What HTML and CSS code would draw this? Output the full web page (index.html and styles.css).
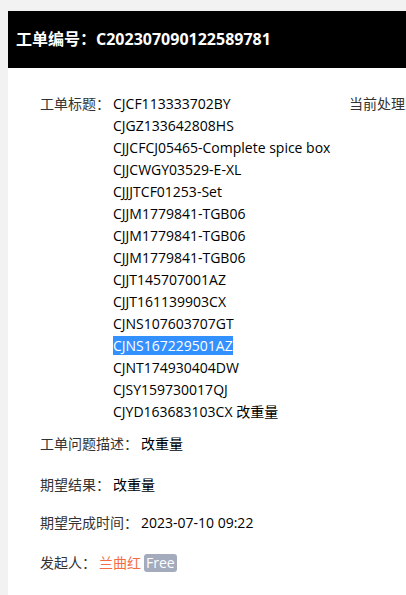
FILE: index.html
```html
<!DOCTYPE html>
<html>
	<head>
		<meta charset="UTF-8">
		<title>工单详情</title>
		<link rel="stylesheet" href="styles.css">
	</head>
	<body>
		<div class="card">
			<div class="head">工单编号：C202307090122589781</div>
			<div class="info">
				<div class="row title-row">
					<span class="label">工单标题：</span>
					<div class="titles">
						<p>CJCF113333702BY</p>
						<p>CJGZ133642808HS</p>
						<p>CJJCFCJ05465-Complete spice box</p>
						<p>CJJCWGY03529-E-XL</p>
						<p>CJJJTCF01253-Set</p>
						<p>CJJM1779841-TGB06</p>
						<p>CJJM1779841-TGB06</p>
						<p>CJJM1779841-TGB06</p>
						<p>CJJT145707001AZ</p>
						<p>CJJT161139903CX</p>
						<p>CJNS107603707GT</p>
						<p><span class="sel">CJNS167229501AZ</span></p>
						<p>CJNT174930404DW</p>
						<p>CJSY159730017QJ</p>
						<p>CJYD163683103CX 改重量</p>
					</div>
					<span class="label">当前处理人：</span>
				</div>
				<div class="row desc">
					<span class="label">工单问题描述：</span>
					<span class="value">改重量</span>
				</div>
				<div class="row result">
					<span class="label">期望结果：</span>
					<span class="value">改重量</span>
				</div>
				<div class="row time">
					<span class="label">期望完成时间：</span>
					<span class="value">2023-07-10 09:22</span>
				</div>
				<div class="row owner">
					<span class="label">发起人：</span>
					<span class="name">兰曲红</span>
					<span class="tag">Free</span>
				</div>
			</div>
		</div>
	</body>
</html>
```

FILE: styles.css
```css
html,body{
	margin: 0;
	padding: 0;
}
body{
	background: #f2f2f2;
	padding: 11px 0 0 8px;
	overflow: hidden;
	font-family: "Open Sans", "Noto Sans CJK SC", sans-serif;
	font-size: 14px;
	color: #000;
}
p{
	margin: 0;
}
.card{
	width: 600px;
	min-height: 600px;
	background: #fff;
}
.head{
	height: 57px;
	line-height: 57px;
	padding-left: 8px;
	background: #000;
	color: #fff;
	font-size: 16px;
	font-weight: bold;
}
.info{
	padding: 25px 0 0 32px;
}
.row{
	display: flex;
	line-height: 22px;
	white-space: nowrap;
}
.label{
	color: #333;
	margin-right: 3px;
}
.title-row .label:first-child{
	width: 70px;
}
.titles{
	width: 236px;
}
.sel{
	background: #3390ff;
	color: #fff;
}
.desc{
	margin-top: 10px;
}
.result{
	margin-top: 19px;
}
.time{
	margin-top: 16px;
}
.owner{
	margin-top: 18px;
	align-items: center;
}
.name{
	color: #f36c44;
}
.tag{
	margin-left: 3px;
	padding: 0 2px;
	height: 18px;
	line-height: 18px;
	background: #a3abbd;
	color: #fff;
	border-radius: 3px;
}
```
